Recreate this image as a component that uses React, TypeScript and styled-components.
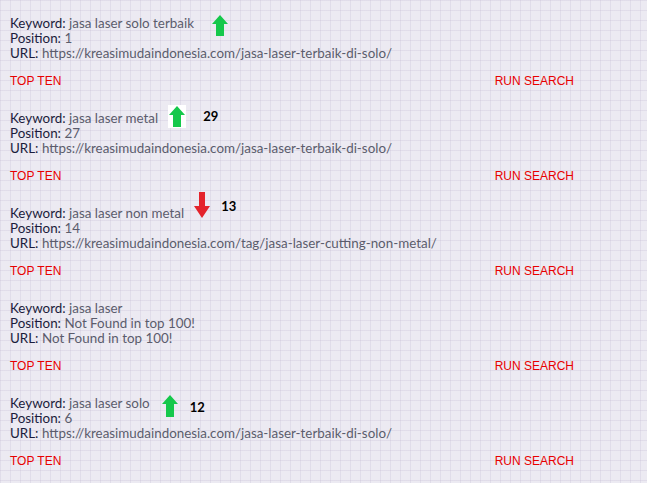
import React from "react";
import styled, { createGlobalStyle } from "styled-components";

const Global = createGlobalStyle`
  html, body { margin: 0; padding: 0; }
  body {
    background-color: #eceaf2;
    background-image:
      linear-gradient(to right, rgba(195, 185, 210, 0.28) 1px, transparent 1px),
      linear-gradient(to bottom, rgba(195, 185, 210, 0.28) 1px, transparent 1px);
    background-size: 10px 10px;
    min-height: 483px;
  }
`;

const Page = styled.div`
  padding: 16px 10px 0 10px;
  font-family: Lato, "Open Sans", sans-serif;
`;

const Block = styled.section`
  margin-bottom: 23px;
`;

const Line = styled.div`
  font-size: 13.4px;
  line-height: 15px;
  height: 15px;
  color: #5b5c6c;
  white-space: nowrap;
`;

const Label = styled.span`
  color: #1b1c3c;
`;

const LinkRow = styled.div`
  margin-top: 13px;
  width: 564px;
  display: flex;
  justify-content: space-between;
  font-family: "Liberation Sans", Arial, sans-serif;
  font-size: 12px;
  line-height: 14px;
`;

const RedLink = styled.a`
  color: #e80000;
  text-decoration: none;
`;

const TrendAnchor = styled.span<{ $gap: number }>`
  position: relative;
  display: inline-block;
  width: 0;
  height: 15px;
  vertical-align: top;
  margin-left: ${(p) => p.$gap}px;
`;

const Badge = styled.span<{ $top: number; $numGap: number }>`
  position: absolute;
  left: 0;
  top: ${(p) => p.$top}px;
  display: flex;
  align-items: center;
  gap: ${(p) => p.$numGap}px;
`;

const ArrowBox = styled.span<{ $boxed?: boolean }>`
  display: flex;
  align-items: center;
  justify-content: center;
  background: ${(p) => (p.$boxed ? "#ffffff" : "transparent")};
  width: ${(p) => (p.$boxed ? "18px" : "auto")};
  height: ${(p) => (p.$boxed ? "23px" : "auto")};
`;

const Count = styled.span<{ $shift: number }>`
  font-family: Lato, "Open Sans", sans-serif;
  font-weight: 700;
  font-size: 13px;
  line-height: 15px;
  color: #000;
  margin-top: ${(p) => p.$shift}px;
`;

const UpArrow = ({ h = 21 }: { h?: number }) => (
  <svg width="16" height={h} viewBox={`0 0 16 ${h}`}>
    <polygon points={`8,0 16,9 12,9 12,${h} 4,${h} 4,9 0,9`} fill="#15c84b" />
  </svg>
);

const DownArrow = () => (
  <svg width="16" height="26" viewBox="0 0 16 26">
    <polygon points="5,0 11,0 11,14 16,14 8,26 0,14 5,14" fill="#e4232b" />
  </svg>
);

type Trend = {
  dir: "up" | "down";
  gap: number;
  top: number;
  num?: string;
  numGap?: number;
  numShift?: number;
  boxed?: boolean;
  h?: number;
};

type Item = {
  keyword: string;
  position: string;
  url: string;
  trend?: Trend;
};

const items: Item[] = [
  {
    keyword: "jasa laser solo terbaik",
    position: "1",
    url: "https://kreasimudaindonesia.com/jasa-laser-terbaik-di-solo/",
    trend: { dir: "up", gap: 18, top: -1 },
  },
  {
    keyword: "jasa laser metal",
    position: "27",
    url: "https://kreasimudaindonesia.com/jasa-laser-terbaik-di-solo/",
    trend: { dir: "up", gap: 10, top: -6, num: "29", numGap: 17, boxed: true, numShift: 0 },
  },
  {
    keyword: "jasa laser non metal",
    position: "14",
    url: "https://kreasimudaindonesia.com/tag/jasa-laser-cutting-non-metal/",
    trend: { dir: "down", gap: 10, top: -14, num: "13", numGap: 11, numShift: 2 },
  },
  {
    keyword: "jasa laser",
    position: "Not Found in top 100!",
    url: "Not Found in top 100!",
  },
  {
    keyword: "jasa laser solo",
    position: "6",
    url: "https://kreasimudaindonesia.com/jasa-laser-terbaik-di-solo/",
    trend: { dir: "up", gap: 12, top: -1, num: "12", numGap: 12, h: 22, numShift: 2 },
  },
];

const TrendMark = ({ t }: { t: Trend }) => (
  <TrendAnchor $gap={t.gap}>
    <Badge $top={t.top} $numGap={t.numGap ?? 0}>
      <ArrowBox $boxed={t.boxed}>
        {t.dir === "up" ? <UpArrow h={t.h} /> : <DownArrow />}
      </ArrowBox>
      {t.num && <Count $shift={t.numShift ?? 0}>{t.num}</Count>}
    </Badge>
  </TrendAnchor>
);

export default function App() {
  return (
    <>
      <Global />
      <Page>
        {items.map((it, i) => (
          <Block key={i}>
            <Line>
              <Label>Keyword:</Label> {it.keyword}
              {it.trend && <TrendMark t={it.trend} />}
            </Line>
            <Line>
              <Label>Position:</Label> {it.position}
            </Line>
            <Line>
              <Label>URL:</Label> {it.url}
            </Line>
            <LinkRow>
              <RedLink href="#">TOP TEN</RedLink>
              <RedLink href="#">RUN SEARCH</RedLink>
            </LinkRow>
          </Block>
        ))}
      </Page>
    </>
  );
}
